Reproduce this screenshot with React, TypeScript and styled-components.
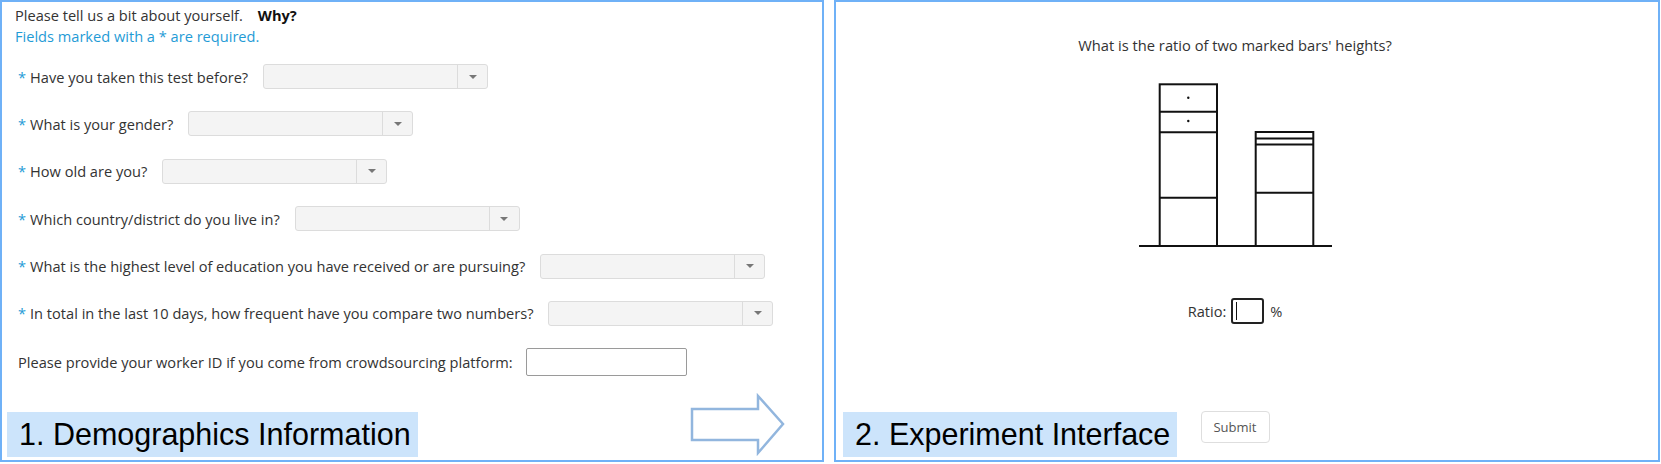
import React from "react";
import styled, { createGlobalStyle } from "styled-components";

const Global = createGlobalStyle`
  html, body { margin: 0; padding: 0; background: #fff; }
  body { font-family: "Open Sans", "Noto Sans", sans-serif; color: #333; }
  * { box-sizing: border-box; }
`;

const Page = styled.div`
  display: flex;
  gap: 10px;
  width: 1661px;
  height: 464px;
`;

const Panel = styled.section<{ $w: number }>`
  position: relative;
  width: ${(p) => p.$w}px;
  height: 462px;
  border: 2px solid #6fb1f7;
  flex: none;
`;

const LeftInner = styled.div`
  padding: 3px 0 0 13px;
  display: flex;
  flex-direction: column;
`;

const Line = styled.div`
  font-size: 14.6px;
  line-height: 21px;
  white-space: nowrap;
`;

const Why = styled.b`
  margin-left: 15px;
  color: #111;
`;

const Note = styled(Line)`
  color: #1f9bd6;
`;

const Form = styled.div`
  margin-top: 17px;
  padding-left: 3px;
  display: flex;
  flex-direction: column;
  gap: 22.4px;
`;

const Row = styled.div`
  display: flex;
  align-items: center;
  height: 25px;
  gap: 15px;
  &:last-child { height: 28px; gap: 13px; }
`;

const Label = styled.span`
  font-size: 14.6px;
  white-space: nowrap;
  color: #333;
`;

const Star = styled.span`
  color: #1f9bd6;
  margin-right: 4px;
`;

const Select = styled.div<{ $w: number }>`
  width: ${(p) => p.$w}px;
  height: 25px;
  background: #f4f4f4;
  border: 1px solid #dcdcdc;
  border-radius: 3px;
  display: flex;
  justify-content: flex-end;
`;

const Caret = styled.div`
  width: 30px;
  border-left: 1px solid #dcdcdc;
  display: flex;
  align-items: center;
  justify-content: center;
  &::after {
    content: "";
    border-left: 4px solid transparent;
    border-right: 4px solid transparent;
    border-top: 4px solid #777;
  }
`;

const TextInput = styled.div`
  width: 161px;
  height: 28px;
  border: 1px solid #9a9a9a;
  border-radius: 2px;
  background: #fff;
`;

const Tag = styled.div<{ $left: number; $w: number }>`
  position: absolute;
  left: ${(p) => p.$left}px;
  top: 410px;
  width: ${(p) => p.$w}px;
  height: 45px;
  background: #cce4fb;
  font-family: "Liberation Sans", Arial, sans-serif;
  font-size: 30.5px;
  line-height: 45px;
  color: #000;
  padding-left: 12px;
  white-space: nowrap;
`;

const Arrow = styled.svg`
  position: absolute;
  left: 684px;
  top: 390px;
`;

const RightInner = styled.div`
  padding: 33px 24px 0 0;
  display: flex;
  flex-direction: column;
  align-items: center;
  height: 100%;
`;

const Question = styled.div`
  font-size: 14.7px;
  line-height: 20px;
  color: #333;
`;

const Chart = styled.svg`
  margin-top: 25px;
  display: block;
`;

const RatioRow = styled.div`
  margin-top: 48px;
  display: flex;
  align-items: center;
  gap: 5px;
  font-size: 14.6px;
  color: #333;
  height: 26px;
`;

const RatioBox = styled.div`
  width: 33px;
  height: 26px;
  border: 2px solid #222;
  border-radius: 3px;
  display: flex;
  align-items: center;
  padding-left: 3px;
  margin-right: 1px;
  &::after {
    content: "";
    width: 1px;
    height: 18px;
    background: #111;
  }
`;

const SubmitButton = styled.button`
  margin-top: 87px;
  width: 69px;
  height: 32px;
  border: 1px solid #dedede;
  border-radius: 4px;
  background: #fff;
  color: #555;
  font-family: "Open Sans", "Noto Sans", sans-serif;
  font-size: 13px;
`;

const questions: { text: string; w: number; star?: boolean }[] = [
  { text: "Have you taken this test before?", w: 225, star: true },
  { text: "What is your gender?", w: 225, star: true },
  { text: "How old are you?", w: 225, star: true },
  { text: "Which country/district do you live in?", w: 225, star: true },
  { text: "What is the highest level of education you have received or are pursuing?", w: 225, star: true },
  { text: "In total in the last 10 days, how frequent have you compare two numbers?", w: 225, star: true },
];

export default function App() {
  return (
    <>
      <Global />
      <Page>
        <Panel $w={824}>
          <LeftInner>
            <Line>
              Please tell us a bit about yourself.<Why>Why?</Why>
            </Line>
            <Note>Fields marked with a * are required.</Note>
            <Form>
              {questions.map((q) => (
                <Row key={q.text}>
                  <Label>
                    <Star>*</Star>
                    {q.text}
                  </Label>
                  <Select $w={q.w}>
                    <Caret />
                  </Select>
                </Row>
              ))}
              <Row>
                <Label>Please provide your worker ID if you come from crowdsourcing platform:</Label>
                <TextInput />
              </Row>
            </Form>
          </LeftInner>
          <Tag $left={5} $w={411}>1. Demographics Information</Tag>
          <Arrow width="110" height="70" viewBox="684 390 110 70">
            <path
              d="M690 407 L756 407 L756 394 L781 422 L756 451 L756 438 L690 438 Z"
              fill="none"
              stroke="#92b6de"
              strokeWidth="2.5"
              strokeLinejoin="miter"
            />
          </Arrow>
        </Panel>
        <Panel $w={826}>
          <RightInner>
            <Question>What is the ratio of two marked bars' heights?</Question>
            <Chart width="200" height="170" viewBox="0 0 200 170">
              <g stroke="#111" strokeWidth="2" fill="none">
                <line x1="4" y1="166" x2="197" y2="166" />
                <rect x="24.7" y="4.3" width="57.3" height="161.7" />
                <line x1="24.7" y1="31.7" x2="82" y2="31.7" />
                <line x1="24.7" y1="52.3" x2="82" y2="52.3" />
                <line x1="24.7" y1="117.7" x2="82" y2="117.7" />
                <rect x="120.7" y="52" width="57.6" height="114" />
                <line x1="120.7" y1="58.5" x2="178.3" y2="58.5" />
                <line x1="120.7" y1="64.5" x2="178.3" y2="64.5" />
                <line x1="120.7" y1="112.7" x2="178.3" y2="112.7" />
              </g>
              <circle cx="53.3" cy="17.7" r="1.2" fill="#111" />
              <circle cx="53.3" cy="41" r="1.2" fill="#111" />
            </Chart>
            <RatioRow>
              Ratio:
              <RatioBox />
              %
            </RatioRow>
            <SubmitButton>Submit</SubmitButton>
          </RightInner>
          <Tag $left={7} $w={334}>2. Experiment Interface</Tag>
        </Panel>
      </Page>
    </>
  );
}
